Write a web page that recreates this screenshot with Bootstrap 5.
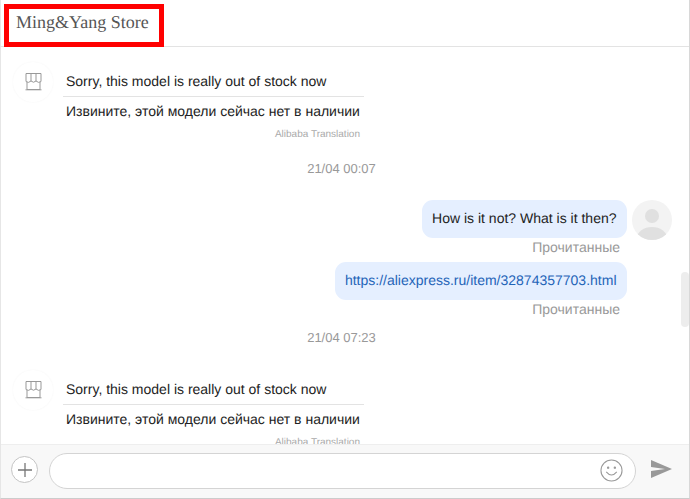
<!DOCTYPE html>
<html><head><meta charset="utf-8">
<link rel="stylesheet" href="https://cdn.jsdelivr.net/npm/bootstrap@5.3.0/dist/css/bootstrap.min.css">
<style>
html,body{height:499px;overflow:hidden;background:#fff}
body{font-family:"Liberation Sans",Arial,sans-serif;font-size:14px;color:#222;text-rendering:geometricPrecision}
.chat-shell{width:690px;height:499px;border-left:1px solid #e6e6e6;border-right:1px solid #d8d8d8;border-bottom:1px solid #ccc;position:relative}
.chat-head{height:47px;border-bottom:1px solid #e3e3e3;padding:4px 0 0 3px}
.store-box{width:160px;height:43px;border:5px solid #f00;padding:1px 0 0 7px;font:18px/25px "Liberation Serif",serif;color:#555;white-space:nowrap}
.chat-body{height:397px;overflow:hidden;padding:15px 0 0 0}
.store-ava{width:40px;height:40px;border-radius:50%;margin:0 10px 0 12px;background:#fff;box-shadow:0 0 2px #f4f4f4}
.store-msg{width:301px;line-height:18px}
.orig{height:35px;padding:10px 0 0 3px;border-bottom:1px solid #e3e3e3}
.trans{padding:5px 0 0 3px;height:25px;white-space:nowrap}
.attrib{font-size:10px;color:#aaa;text-align:right;line-height:12px;margin-top:7px;padding-right:4px}
.stamp{font-size:13px;color:#999;text-align:center;line-height:16px;padding-right:7px}
.bubble{background:#e5efff;border-radius:11px;height:38px;padding:0 10.500px 0 10px;line-height:37px;white-space:nowrap}
.bubble a{color:#1f64b8;text-decoration:none}
.user-ava{width:40px;height:40px;margin:0 17px 0 5px;flex:none}
.read-mark{color:#999;line-height:18px;margin:0 69px 0 0;text-align:right}
.scroll-thumb{position:absolute;right:0;top:272px;width:8px;height:55px;border-radius:4px;background:#ededed}
.chat-foot{height:54px;background:#f8f8f8;border-top:1px solid #eee;padding:8px 0 0 10px}
.plus-btn{width:27px;height:27px;border:1px solid #c4c4c4;border-radius:50%;background:#fff;margin:3px 11px 0 0;flex:none}
.msg-input{width:587px;height:36px;border:1px solid #d4d4d4;border-radius:18px;background:#fff;padding:5px 12px 0 0;flex:none}
.send-ico{margin:7px 0 0 15px}
</style></head><body>
<div class="chat-shell">
 <div class="chat-head"><div class="store-box">Ming&amp;Yang Store</div></div>
 <div class="chat-body">
  <div class="d-flex">
   <div class="store-ava d-flex justify-content-center align-items-center flex-shrink-0">
    <svg width="17" height="18" viewBox="0 0 17 18" fill="none" stroke="#999" stroke-width="1"><path d="M1 .5H16V8.5M1 .5V8.5M6 .5V8M11 .5V8M1 8.5Q3.5 10.500 6 8Q8.500 10.500 11 8Q13.500 10.500 16 8.500M2 9V16.500H15V9M.5 16.800H16.500" /></svg>
   </div>
   <div class="store-msg">
    <div class="orig">Sorry, this model is really out of stock now</div>
    <div class="trans">Извините, этой модели сейчас нет в наличии</div>
    <div class="attrib">Alibaba Translation</div>
   </div>
  </div>
  <div class="stamp" style="margin-top:20px">21/04 00:07</div>
  <div class="d-flex justify-content-end" style="margin-top:23px">
   <div class="bubble">How is it not? What is it then?</div>
   <svg class="user-ava" viewBox="0 0 40 40"><defs><clipPath id="c"><circle cx="20" cy="20" r="20"/></clipPath></defs><circle cx="20" cy="20" r="20" fill="#f3f3f3"/><g clip-path="url(#c)" fill="#e0e0e0"><circle cx="20" cy="16" r="7"/><ellipse cx="20" cy="38" rx="15" ry="11"/></g></svg>
  </div>
  <div class="read-mark" style="margin-top:-2px">Прочитанные</div>
  <div class="d-flex justify-content-end" style="margin-top:6px;padding-right:62px">
   <div class="bubble"><a href="#">https://aliexpress.ru/item/32874357703.html</a></div>
  </div>
  <div class="read-mark">Прочитанные</div>
  <div class="stamp" style="margin-top:12px">21/04 07:23</div>
  <div class="d-flex" style="margin-top:24px">
   <div class="store-ava d-flex justify-content-center align-items-center flex-shrink-0">
    <svg width="17" height="18" viewBox="0 0 17 18" fill="none" stroke="#999" stroke-width="1"><path d="M1 .5H16V8.5M1 .5V8.5M6 .5V8M11 .5V8M1 8.5Q3.5 10.500 6 8Q8.500 10.500 11 8Q13.500 10.500 16 8.500M2 9V16.500H15V9M.5 16.800H16.500" /></svg>
   </div>
   <div class="store-msg">
    <div class="orig">Sorry, this model is really out of stock now</div>
    <div class="trans">Извините, этой модели сейчас нет в наличии</div>
    <div class="attrib">Alibaba Translation</div>
   </div>
  </div>
 </div>
 <div class="scroll-thumb"></div>
 <div class="chat-foot d-flex">
  <div class="plus-btn d-flex justify-content-center align-items-center">
   <svg width="14" height="14" viewBox="0 0 14 14" stroke="#777" stroke-width="1.3"><path d="M7 0V14M0 7H14"/></svg>
  </div>
  <div class="msg-input d-flex justify-content-end">
   <svg width="23" height="23" viewBox="0 0 24 24" fill="none" stroke="#999" stroke-width="1.1"><circle cx="12" cy="12" r="11"/><path d="M6.500 13.500Q12 20 17.500 13.500"/><circle cx="8.500" cy="9" r=".7" fill="#999"/><circle cx="15.500" cy="9" r=".7" fill="#999"/></svg>
  </div>
  <svg class="send-ico" width="21" height="18" viewBox="0 0 21 18" fill="#999"><path d="M0 0 21 9 0 18V11L14 9 0 7Z"/></svg>
 </div>
</div>
</body></html>
